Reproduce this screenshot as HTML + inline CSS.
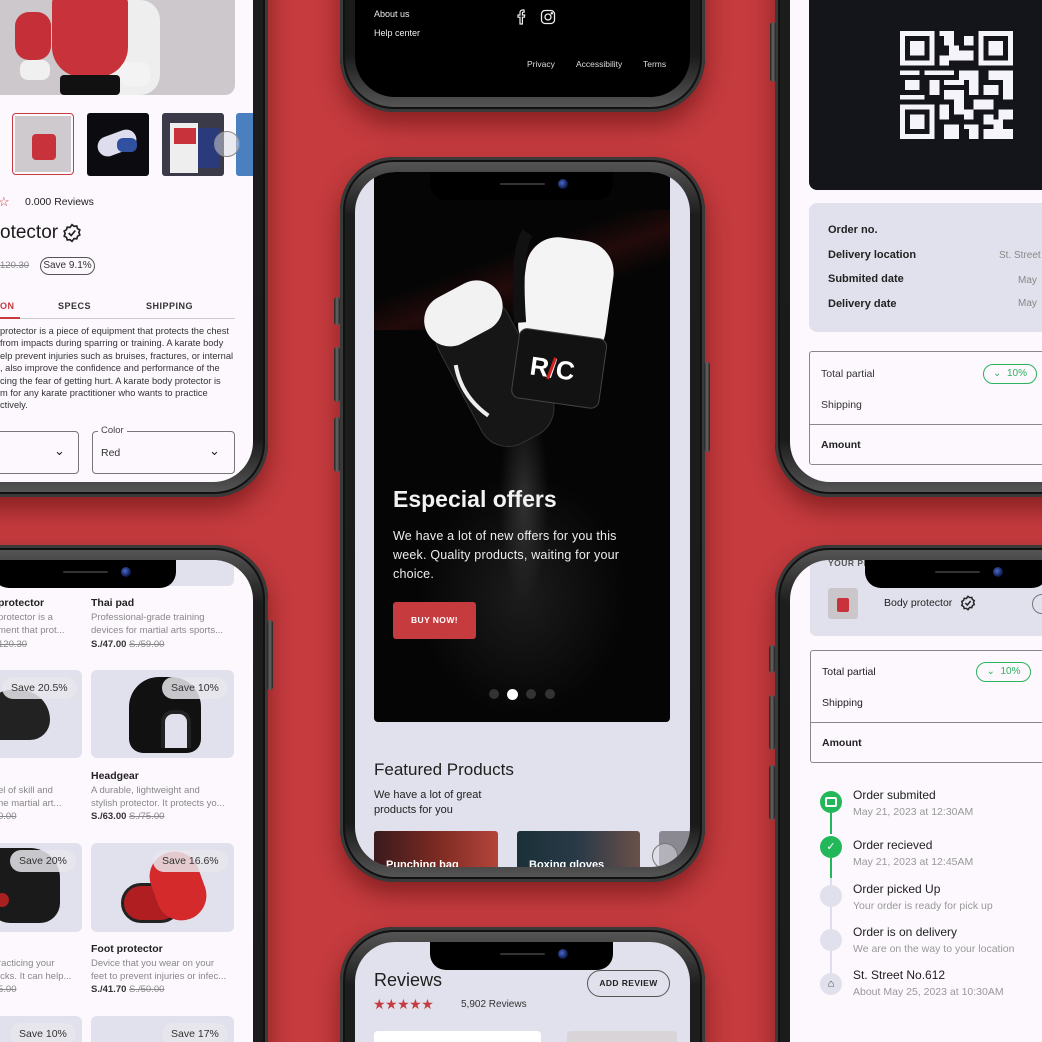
<!DOCTYPE html>
<html><head><meta charset="utf-8"><style>
*{box-sizing:border-box;margin:0;padding:0}
html,body{width:1042px;height:1042px;overflow:hidden}
body{background:#c53b3e;font-family:"Liberation Sans",Arial,sans-serif}
#w{position:relative;width:1042px;height:1042px;overflow:hidden;background:#c53b3e}
.ph{position:absolute;width:365px;height:725px;border-radius:54px;background:linear-gradient(180deg,#5a5a5a,#1d1d1d 8%,#1a1a1a 92%,#5a5a5a);box-shadow:0 12px 24px rgba(60,0,0,.45),inset 0 0 0 3px #3a3a3a,inset 0 0 0 5px #111}
.sc{position:absolute;left:15px;top:15px;width:335px;height:695px;border-radius:40px;overflow:hidden;background:#fcf8fd}
.pg{position:absolute;width:1042px;height:1042px}
.pg>*{position:absolute}
.notch{position:absolute;left:75px;top:0;width:183px;height:28px;background:#000;border-radius:0 0 16px 16px;z-index:5}
.notch:before{content:"";position:absolute;left:70px;top:11px;width:45px;height:2px;background:#333;border-radius:2px}
.notch:after{content:"";position:absolute;left:128px;top:7px;width:10px;height:10px;border-radius:50%;background:radial-gradient(circle at 40% 40%,#4a6ad0,#0a1440 70%)}
.btn{position:absolute;width:6px;background:linear-gradient(90deg,#222,#666,#222);border-radius:3px}
.t{white-space:nowrap}
.g{background:#e0e1ec}
.pill{border:1px solid #555;border-radius:12px;font-size:10px;color:#333;text-align:center}
.spill{background:rgba(230,230,236,.85);border-radius:14px;font-size:10.5px;color:#333;height:22px;line-height:22px;padding:0 9px}
.h{font-size:10.5px;font-weight:bold;color:#222}
.d{font-size:9.5px;color:#888;line-height:13px}
.pr{font-size:9.5px;font-weight:bold;color:#333}
.pr s{color:#888;font-weight:normal}
</style></head><body><div id="w">

<!-- TOP LEFT -->
<div class="ph" style="left:-97px;top:-228px">
<div class="sc"><div class="pg" style="left:82px;top:213px">
  <div style="left:0;top:0;width:235px;height:95px;background:#cdc8cc;border-radius:0 0 10px 0;overflow:hidden">
    <div style="position:absolute;left:70px;top:0;width:90px;height:95px;background:#eee;border-radius:20px"></div>
    <div style="position:absolute;left:52px;top:-5px;width:76px;height:82px;background:#c8323a;border-radius:8px 8px 30px 30px"></div>
    <div style="position:absolute;left:15px;top:12px;width:36px;height:48px;background:#c53038;border-radius:14px"></div>
    <div style="position:absolute;left:60px;top:75px;width:60px;height:20px;background:#111;border-radius:4px"></div>
    <div style="position:absolute;left:120px;top:62px;width:30px;height:24px;background:#f3f3f3;border-radius:8px"></div>
    <div style="position:absolute;left:20px;top:60px;width:30px;height:20px;background:#f0f0f0;border-radius:8px"></div>
  </div>
  <div style="left:12px;top:113px;width:62px;height:62px;border:1px solid #c53b3e;border-radius:4px;padding:2px"><div style="width:100%;height:100%;background:#cfcace;position:relative"><div style="position:absolute;left:17px;top:18px;width:24px;height:26px;background:#c8323a;border-radius:4px"></div></div></div>
  <div style="left:87px;top:113px;width:62px;height:63px;background:#0c0c10;border-radius:3px;overflow:hidden"><div style="position:absolute;left:10px;top:20px;width:40px;height:20px;background:#dde;transform:rotate(-20deg);border-radius:10px"></div><div style="position:absolute;left:30px;top:25px;width:20px;height:14px;background:#3050a0;border-radius:6px"></div></div>
  <div style="left:162px;top:113px;width:62px;height:63px;background:#3a3a48;border-radius:3px;overflow:hidden"><div style="position:absolute;left:8px;top:10px;width:28px;height:50px;background:#eee"></div><div style="position:absolute;left:12px;top:15px;width:22px;height:16px;background:#c8323a"></div><div style="position:absolute;left:36px;top:15px;width:22px;height:40px;background:#2a3a7a"></div></div>
  <div style="left:236px;top:113px;width:20px;height:63px;background:#4a80c0;border-radius:3px"></div>
  <div style="left:214px;top:131px;width:26px;height:26px;border-radius:50%;border:1px solid #888;background:rgba(220,220,230,.5)"></div>
  <div class="t" style="left:-2px;top:194px;color:#c53b3e;font-size:13px">☆</div>
  <div class="t" style="left:25px;top:196px;font-size:10.5px;color:#222">0.000 Reviews</div>
  <div class="t" style="left:0;top:222px;font-size:19px;color:#1a1a1a">otector</div>
  <svg style="left:62px;top:223px" width="20" height="20" viewBox="0 0 24 24" fill="none" stroke="#222" stroke-width="2"><path d="M12 2l2.5 2 3.2-.4.9 3.1 2.8 1.6-1.2 3 1.2 3-2.8 1.6-.9 3.1-3.2-.4L12 22l-2.5-2-3.2.4-.9-3.1-2.8-1.6 1.2-3-1.2-3 2.8-1.6.9-3.1 3.2.4z"/><path d="M8 12l3 3 5-6"/></svg>
  <div class="t" style="left:0;top:260px;font-size:9.5px;color:#888;text-decoration:line-through">120.30</div>
  <div class="pill t" style="left:40px;top:257px;width:55px;height:18px;line-height:16px">Save 9.1%</div>
  <div class="t" style="left:0;top:301px;font-size:9px;font-weight:bold;color:#c53b3e;letter-spacing:.5px">ON</div>
  <div class="t" style="left:58px;top:301px;font-size:9px;font-weight:bold;color:#333;letter-spacing:.5px">SPECS</div>
  <div class="t" style="left:146px;top:301px;font-size:9px;font-weight:bold;color:#333;letter-spacing:.5px">SHIPPING</div>
  <div style="left:0;top:318px;width:235px;height:1px;background:#ccc"></div>
  <div style="left:0;top:317px;width:20px;height:2px;background:#c53b3e"></div>
  <div style="left:0;top:325px;width:240px;font-size:9.3px;color:#333;line-height:12.4px;white-space:nowrap">protector is a piece of equipment that protects the chest<br>from impacts during sparring or training. A karate body<br>elp prevent injuries such as bruises, fractures, or internal<br>, also improve the confidence and performance of the<br>cing the fear of getting hurt. A karate body protector is<br>m for any karate practitioner who wants to practice<br>ctively.</div>
  <div style="left:-10px;top:431px;width:89px;height:43px;border:1px solid #777;border-radius:4px"></div>
  <div class="t" style="left:54px;top:443px;font-size:13px;color:#222">⌄</div>
  <div style="left:92px;top:431px;width:143px;height:43px;border:1px solid #777;border-radius:4px"></div>
  <div class="t" style="left:98px;top:425px;font-size:9.5px;color:#444;background:#fcf8fd;padding:0 3px">Color</div>
  <div class="t" style="left:101px;top:447px;font-size:10.5px;color:#333">Red</div>
  <div class="t" style="left:209px;top:443px;font-size:13px;color:#222">⌄</div>
</div></div></div>

<!-- TOP CENTER -->
<div class="ph" style="left:340px;top:-613px">
<div class="sc" style="background:#000"><div class="pg" style="left:-355px;top:598px">
  <div class="t" style="left:374px;top:9px;font-size:9px;color:#eee">About us</div>
  <div class="t" style="left:374px;top:28px;font-size:9px;color:#eee">Help center</div>
  <svg style="left:516px;top:9px" width="12" height="16" viewBox="0 0 12 16" fill="none" stroke="#eee" stroke-width="1.2"><path d="M8 1H6.5C5 1 4 2 4 3.5V6H2v2.2h2V15h2.4V8.2h2l.3-2.2H6.4V4c0-.6.3-.9.9-.9H8.2z"/></svg>
  <svg style="left:540px;top:9px" width="16" height="16" viewBox="0 0 16 16" fill="none" stroke="#eee" stroke-width="1.3"><rect x="1.5" y="1.5" width="13" height="13" rx="3.5"/><circle cx="8" cy="8" r="3"/><circle cx="11.8" cy="4.2" r=".6" fill="#eee"/></svg>
  <div class="t" style="left:527px;top:59px;font-size:8.5px;color:#ddd">Privacy</div>
  <div class="t" style="left:576px;top:59px;font-size:8.5px;color:#ddd">Accessibility</div>
  <div class="t" style="left:643px;top:59px;font-size:8.5px;color:#ddd">Terms</div>
</div></div></div>

<!-- TOP RIGHT -->
<div class="ph" style="left:775px;top:-228px">
<div class="btn" style="left:-5px;top:250px;height:60px"></div>
<div class="sc"><div class="pg" style="left:-790px;top:213px">
  <div style="left:809px;top:-20px;width:260px;height:210px;background:#14141b;border-radius:8px"></div>
  <svg style="left:900px;top:30px" width="113" height="110" viewBox="0 0 23 22" shape-rendering="crispEdges" fill="#f4f4fa">
    <path d="M0 0h7v7H0zM1 1v5h5V1zM2 2h3v3H2z" fill-rule="evenodd"/>
    <path d="M16 0h7v7h-7zM17 1v5h5V1zM18 2h3v3h-3z" fill-rule="evenodd"/>
    <path d="M0 15h7v7H0zM1 16v5h5v-5zM2 17h3v3H2z" fill-rule="evenodd"/>
    <path d="M8 0h3v1H8zM9 1h2v2H9zM10 3h2v3h-2zM13 1h2v2h-2zM12 4h3v2h-3zM8 5h2v2H8zM0 8h4v1H0zM5 8h6v1H5zM12 8h4v2h-4zM18 8h5v2h-5zM1 10h3v2H1zM6 10h2v3H6zM9 10h4v1H9zM14 10h2v3h-2zM17 11h3v2h-3zM21 10h2v4h-2zM0 13h5v1H0zM9 12h4v2H9zM11 14h2v3h-2zM15 14h4v2h-4zM8 15h2v3H8zM13 16h2v2h-2zM17 17h2v2h-2zM20 16h3v2h-3zM9 19h3v3H9zM13 19h3v1h-3zM14 20h2v2h-2zM17 20h6v2h-6zM19 18h2v2h-2z"/>
  </svg>
  <div style="left:809px;top:203px;width:260px;height:129px;background:#e0e1ec;border-radius:8px"></div>
  <div class="t" style="left:828px;top:224px;font-size:11px;font-weight:bold;color:#222">Order no.</div>
  <div class="t" style="left:828px;top:249px;font-size:11px;font-weight:bold;color:#222">Delivery location</div>
  <div class="t" style="left:828px;top:273px;font-size:11px;font-weight:bold;color:#222">Submited date</div>
  <div class="t" style="left:828px;top:298px;font-size:11px;font-weight:bold;color:#222">Delivery date</div>
  <div class="t" style="left:999px;top:250px;font-size:10px;color:#888">St. Street</div>
  <div class="t" style="left:1018px;top:275px;font-size:10px;color:#888">May</div>
  <div class="t" style="left:1018px;top:298px;font-size:10px;color:#888">May</div>
  <div style="left:809px;top:351px;width:260px;height:114px;border:1px solid #888;border-radius:3px"></div>
  <div style="left:809px;top:424px;width:260px;height:1px;background:#888"></div>
  <div class="t" style="left:821px;top:368px;font-size:10.5px;color:#333">Total partial</div>
  <div style="left:983px;top:364px;width:54px;height:20px;border:1px solid #2bb35e;border-radius:10px;color:#2bb35e;font-size:10px;line-height:18px;text-align:center">⌄&nbsp; 10%</div>
  <div class="t" style="left:821px;top:399px;font-size:10.5px;color:#333">Shipping</div>
  <div class="t" style="left:821px;top:439px;font-size:10.5px;font-weight:bold;color:#222">Amount</div>
</div></div></div>

<!-- MIDDLE -->
<div class="ph" style="left:340px;top:157px">
<div class="btn" style="left:-6px;top:140px;height:28px"></div>
<div class="btn" style="left:-6px;top:190px;height:55px"></div>
<div class="btn" style="left:-6px;top:260px;height:55px"></div>
<div class="btn" style="left:364px;top:205px;height:90px"></div>
<div class="sc" style="background:#e0e1ec"><div class="notch"></div><div class="pg" style="left:-355px;top:-172px">
  <div style="left:374px;top:150px;width:296px;height:572px;background:radial-gradient(ellipse 50% 30% at 50% 78%,#1c1c1c,#050505 70%),#050505;border-radius:4px;overflow:hidden">
    <div style="position:absolute;left:0;top:60px;width:296px;height:120px;background:linear-gradient(160deg,transparent 40%,rgba(90,20,20,.35) 55%,transparent 70%)"></div>
    <div style="position:absolute;left:125px;top:250px;width:50px;height:200px;background:radial-gradient(ellipse at center,rgba(90,90,90,.5),transparent 70%)"></div>
    <svg style="position:absolute;left:50px;top:70px" width="200" height="230" viewBox="0 0 200 230">
      <g transform="rotate(-28 60 130)"><rect x="20" y="80" width="78" height="150" rx="30" fill="#161616" stroke="#333"/><rect x="18" y="62" width="82" height="52" rx="26" fill="#f2f2f2"/><path d="M28 130q-10 30 5 60" stroke="#eee" stroke-width="4" fill="none"/></g>
      <g transform="rotate(8 150 100)"><rect x="95" y="20" width="88" height="120" rx="32" fill="#f4f4f4"/><path d="M92 20q-10 20 5 90" stroke="#111" stroke-width="12" fill="none"/><rect x="98" y="115" width="88" height="70" rx="8" fill="#121212" stroke="#444"/><text x="113" y="160" font-family="Liberation Sans" font-weight="bold" font-size="26" fill="#fff">R/C</text><line x1="137" y1="140" x2="132" y2="162" stroke="#d02020" stroke-width="3"/></g>
    </svg>
  </div>
  <div class="t" style="left:393px;top:486px;font-size:23px;color:#f2f2f2;font-weight:bold">Especial offers</div>
  <div style="left:393px;top:527px;width:240px;font-size:12.5px;color:#eee;line-height:19px;letter-spacing:.2px">We have a lot of new offers for you this week. Quality products, waiting for your choice.</div>
  <div style="left:393px;top:602px;width:83px;height:37px;background:#c53b3e;border-radius:3px;color:#fff;font-size:8.5px;font-weight:bold;text-align:center;line-height:37px;letter-spacing:.4px">BUY NOW!</div>
  <div style="left:489px;top:689px;width:10px;height:10px;border-radius:50%;background:#333"></div>
  <div style="left:507px;top:689px;width:11px;height:11px;border-radius:50%;background:#fff"></div>
  <div style="left:526px;top:689px;width:10px;height:10px;border-radius:50%;background:#333"></div>
  <div style="left:545px;top:689px;width:10px;height:10px;border-radius:50%;background:#333"></div>
  <div class="t" style="left:374px;top:760px;font-size:17px;color:#1e1e1e">Featured Products</div>
  <div style="left:374px;top:788px;font-size:11px;color:#222;line-height:15px">We have a lot of great<br>products for you</div>
  <div style="left:374px;top:831px;width:124px;height:50px;background:linear-gradient(90deg,#3a1a1c,#7a2a22 50%,#b5443a);border-radius:3px;overflow:hidden"><div class="t" style="position:absolute;left:12px;top:28px;color:#fff;font-size:11px;font-weight:bold">Punching bag</div></div>
  <div style="left:517px;top:831px;width:123px;height:50px;background:linear-gradient(90deg,#1a3038,#2a3a48 50%,#6a5048);border-radius:3px;overflow:hidden"><div class="t" style="position:absolute;left:12px;top:28px;color:#fff;font-size:11px;font-weight:bold">Boxing gloves</div></div>
  <div style="left:659px;top:831px;width:40px;height:50px;background:#8a8890;border-radius:3px"></div>
  <div style="left:652px;top:843px;width:26px;height:26px;border-radius:50%;border:1px solid #777;background:rgba(220,220,230,.5)"></div>
</div></div></div>

<!-- BOTTOM LEFT -->
<div class="ph" style="left:-97px;top:545px">
<div class="btn" style="left:364px;top:75px;height:70px"></div>
<div class="sc"><div class="notch"></div><div class="pg" style="left:82px;top:-560px">
  <div class="g" style="left:0;top:560px;width:234px;height:26px;border-radius:0 0 6px 0"></div>
  <div class="t h" style="left:-2px;top:597px">protector</div>
  <div class="t d" style="left:-2px;top:611px">protector is a<br>ment that prot...</div>
  <div class="t pr" style="left:-2px;top:639px"><s>120.30</s></div>
  <div class="t h" style="left:91px;top:597px">Thai pad</div>
  <div class="t d" style="left:91px;top:611px">Professional-grade training<br>devices for martial arts sports...</div>
  <div class="t pr" style="left:91px;top:639px">S./47.00 <s>S./59.00</s></div>

  <div class="g" style="left:-10px;top:670px;width:92px;height:88px;border-radius:6px;overflow:hidden"><div style="position:absolute;left:0;top:20px;width:60px;height:50px;background:#222;border-radius:20px 30px 20px 10px"></div></div>
  <div class="spill t" style="left:2px;top:677px">Save 20.5%</div>
  <div class="g" style="left:91px;top:670px;width:143px;height:88px;border-radius:6px;overflow:hidden"><div style="position:absolute;left:38px;top:7px;width:72px;height:76px;background:#111;border-radius:30px 30px 14px 14px"></div><div style="position:absolute;left:70px;top:40px;width:30px;height:38px;background:#e0e1ec;border-radius:12px 12px 0 0;border:4px solid #222;border-bottom:none"></div></div>
  <div class="spill t" style="left:162px;top:677px">Save 10%</div>
  <div class="t h" style="left:91px;top:770px">Headgear</div>
  <div class="t d" style="left:-2px;top:784px">el of skill and<br>he martial art...</div>
  <div class="t pr" style="left:-2px;top:811px"><s>0.00</s></div>
  <div class="t d" style="left:91px;top:784px">A durable, lightweight and<br>stylish protector. It protects yo...</div>
  <div class="t pr" style="left:91px;top:811px">S./63.00 <s>S./75.00</s></div>

  <div class="g" style="left:-10px;top:843px;width:92px;height:89px;border-radius:6px;overflow:hidden"><div style="position:absolute;left:0;top:5px;width:70px;height:75px;background:#1a1a1a;border-radius:10px 30px 20px 20px"></div><div style="position:absolute;left:5px;top:50px;width:14px;height:14px;background:#a82020;border-radius:50%"></div></div>
  <div class="spill t" style="left:10px;top:850px">Save 20%</div>
  <div class="g" style="left:91px;top:843px;width:143px;height:89px;border-radius:6px;overflow:hidden"><div style="position:absolute;left:30px;top:40px;width:60px;height:40px;background:#b01e22;border-radius:30px;border:3px solid #222"></div><div style="position:absolute;left:62px;top:8px;width:50px;height:70px;background:#d42a2c;border-radius:25px;transform:rotate(-20deg)"></div></div>
  <div class="spill t" style="left:153px;top:850px">Save 16.6%</div>
  <div class="t h" style="left:91px;top:943px">Foot protector</div>
  <div class="t d" style="left:-2px;top:957px">racticing your<br>icks. It can help...</div>
  <div class="t pr" style="left:-2px;top:984px"><s>5.00</s></div>
  <div class="t d" style="left:91px;top:957px">Device that you wear on your<br>feet to prevent injuries or infec...</div>
  <div class="t pr" style="left:91px;top:984px">S./41.70 <s>S./50.00</s></div>
  <div class="g" style="left:-10px;top:1016px;width:92px;height:40px;border-radius:6px"></div>
  <div class="spill t" style="left:10px;top:1023px">Save 10%</div>
  <div class="g" style="left:91px;top:1016px;width:143px;height:40px;border-radius:6px"></div>
  <div class="spill t" style="left:162px;top:1023px">Save 17%</div>
</div></div></div>

<!-- BOTTOM CENTER -->
<div class="ph" style="left:340px;top:927px">
<div class="sc" style="background:#e0e1ec"><div class="notch"></div><div class="pg" style="left:-355px;top:-942px">
  <div class="t" style="left:374px;top:970px;font-size:18px;color:#1e1e1e">Reviews</div>
  <div style="left:587px;top:970px;width:83px;height:27px;border:1px solid #555;border-radius:14px;font-size:8.5px;font-weight:bold;color:#222;text-align:center;line-height:25px;letter-spacing:.4px">ADD REVIEW</div>
  <div class="t" style="left:373px;top:996px;font-size:14px;color:#c53b3e;letter-spacing:-.5px">★★★★★</div>
  <div class="t" style="left:461px;top:999px;font-size:10px;color:#333">5,902 Reviews</div>
  <div style="left:374px;top:1031px;width:167px;height:30px;background:#fff;border-radius:4px"></div>
  <div style="left:567px;top:1031px;width:110px;height:30px;background:#d8d4d8;border-radius:4px"></div>
</div></div></div>

<!-- BOTTOM RIGHT -->
<div class="ph" style="left:775px;top:545px">
<div class="btn" style="left:-6px;top:100px;height:28px"></div>
<div class="btn" style="left:-6px;top:150px;height:55px"></div>
<div class="btn" style="left:-6px;top:220px;height:55px"></div>
<div class="sc"><div class="notch"></div><div class="pg" style="left:-790px;top:-560px">
  <div class="g" style="left:810px;top:550px;width:260px;height:86px;border-radius:6px"></div>
  <div class="t" style="left:828px;top:558px;font-size:8.5px;font-weight:bold;color:#555;letter-spacing:.5px">YOUR PR</div>
  <div style="left:828px;top:588px;width:30px;height:31px;background:#cbc6ca;border-radius:3px;overflow:hidden"><div style="position:absolute;left:9px;top:10px;width:12px;height:14px;background:#c8323a;border-radius:2px"></div></div>
  <div class="t" style="left:884px;top:597px;font-size:10.5px;color:#222">Body protector</div>
  <svg style="left:960px;top:595px" width="16" height="16" viewBox="0 0 24 24" fill="none" stroke="#222" stroke-width="2.2"><path d="M12 2l2.5 2 3.2-.4.9 3.1 2.8 1.6-1.2 3 1.2 3-2.8 1.6-.9 3.1-3.2-.4L12 22l-2.5-2-3.2.4-.9-3.1-2.8-1.6 1.2-3-1.2-3 2.8-1.6.9-3.1 3.2.4z"/><path d="M8 12l3 3 5-6"/></svg>
  <div style="left:1032px;top:594px;width:20px;height:20px;border:1px solid #777;border-radius:10px"></div>
  <div style="left:810px;top:650px;width:260px;height:113px;border:1px solid #888;border-radius:3px"></div>
  <div style="left:810px;top:722px;width:260px;height:1px;background:#888"></div>
  <div class="t" style="left:822px;top:666px;font-size:10.5px;color:#222">Total partial</div>
  <div style="left:976px;top:662px;width:55px;height:20px;border:1px solid #2bb35e;border-radius:10px;color:#2bb35e;font-size:10px;line-height:18px;text-align:center">⌄&nbsp; 10%</div>
  <div class="t" style="left:822px;top:697px;font-size:10.5px;color:#222">Shipping</div>
  <div class="t" style="left:822px;top:737px;font-size:10.5px;font-weight:bold;color:#222">Amount</div>
  <div style="left:830px;top:812px;width:2px;height:22px;background:#22b85a"></div>
  <div style="left:830px;top:858px;width:2px;height:20px;background:#22b85a"></div>
  <div style="left:830px;top:878px;width:2px;height:100px;background:#dde"></div>
  <div style="left:820px;top:791px;width:22px;height:22px;border-radius:50%;background:#22b85a"></div>
  <div style="left:825px;top:797px;width:12px;height:10px;border:2px solid #fff;border-radius:2px"></div>
  <div style="left:820px;top:836px;width:22px;height:22px;border-radius:50%;background:#22b85a;color:#fff;font-size:11px;text-align:center;line-height:22px">✓</div>
  <div style="left:820px;top:885px;width:22px;height:22px;border-radius:50%;background:#e0e1ec"></div>
  <div style="left:820px;top:929px;width:22px;height:22px;border-radius:50%;background:#e0e1ec"></div>
  <div style="left:820px;top:973px;width:22px;height:22px;border-radius:50%;background:#e0e1ec;font-size:11px;color:#444;text-align:center;line-height:22px">⌂</div>
  <div class="t" style="left:853px;top:788px;font-size:12px;color:#1e1e1e">Order submited</div>
  <div class="t" style="left:853px;top:806px;font-size:10.5px;color:#999">May 21, 2023 at 12:30AM</div>
  <div class="t" style="left:853px;top:838px;font-size:12px;color:#1e1e1e">Order recieved</div>
  <div class="t" style="left:853px;top:856px;font-size:10.5px;color:#999">May 21, 2023 at 12:45AM</div>
  <div class="t" style="left:853px;top:882px;font-size:12px;color:#1e1e1e">Order picked Up</div>
  <div class="t" style="left:853px;top:900px;font-size:10.5px;color:#999">Your order is ready for pick up</div>
  <div class="t" style="left:853px;top:925px;font-size:12px;color:#1e1e1e">Order is on delivery</div>
  <div class="t" style="left:853px;top:943px;font-size:10.5px;color:#999">We are on the way to your location</div>
  <div class="t" style="left:853px;top:968px;font-size:12px;color:#1e1e1e">St. Street No.612</div>
  <div class="t" style="left:853px;top:986px;font-size:10.5px;color:#999">About May 25, 2023 at 10:30AM</div>
</div></div></div>

</div></body></html>
